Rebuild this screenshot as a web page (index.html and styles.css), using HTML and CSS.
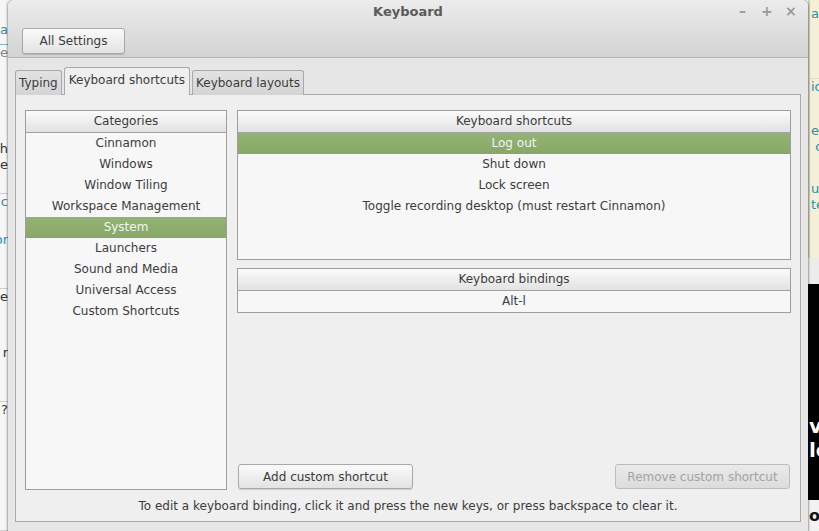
FILE: index.html
```html
<!DOCTYPE html>
<html>
<head>
<meta charset="utf-8">
<title>Keyboard</title>
<link rel="stylesheet" href="styles.css">
</head>
<body>
<div class="screen">
  <div class="bg-left">
    <div class="frag h22"></div>
    <div class="frag h16 teal"><span>la</span></div>
    <div class="frag h6 line-teal"></div>
    <div class="frag h16 gray"><span>e</span></div>
    <div class="frag h80"></div>
    <div class="frag h16"><span>Wh</span></div>
    <div class="frag h16"><span>e</span></div>
    <div class="frag h20 line-gray"></div>
    <div class="frag h16 teal"><span>c</span></div>
    <div class="frag h22"></div>
    <div class="frag h16 teal"><span>or</span></div>
    <div class="frag h40 line-gray"></div>
    <div class="frag h16"><span>ue</span></div>
    <div class="frag h40"></div>
    <div class="frag h16"><span>r</span></div>
    <div class="frag h40 line-gray"></div>
    <div class="frag h16"><span>?</span></div>
    <div class="frag fill line-gray"></div>
  </div>

  <div class="window">
    <div class="header">
      <div class="titlebar">
        <span></span>
        <span class="title">Keyboard</span>
        <div class="wm">
          <span class="wm-btn">&#8211;</span>
          <span class="wm-btn">+</span>
          <span class="wm-btn">&#215;</span>
        </div>
      </div>
      <div class="toolbar">
        <button class="btn settings">All Settings</button>
      </div>
    </div>

    <div class="content">
      <div class="tabs">
        <div class="tab">Typing</div>
        <div class="tab active">Keyboard shortcuts</div>
        <div class="tab">Keyboard layouts</div>
      </div>
      <div class="page">
        <div class="columns">
          <div class="tree categories">
            <div class="tree-head">Categories</div>
            <div class="row">Cinnamon</div>
            <div class="row">Windows</div>
            <div class="row">Window Tiling</div>
            <div class="row">Workspace Management</div>
            <div class="row selected">System</div>
            <div class="row">Launchers</div>
            <div class="row">Sound and Media</div>
            <div class="row">Universal Access</div>
            <div class="row">Custom Shortcuts</div>
          </div>
          <div class="right">
            <div class="tree shortcuts">
              <div class="tree-head">Keyboard shortcuts</div>
              <div class="row selected">Log out</div>
              <div class="row">Shut down</div>
              <div class="row">Lock screen</div>
              <div class="row">Toggle recording desktop (must restart Cinnamon)</div>
            </div>
            <div class="tree bindings">
              <div class="tree-head">Keyboard bindings</div>
              <div class="row">Alt-l</div>
            </div>
            <div class="spacer"></div>
            <div class="actions">
              <button class="btn action">Add custom shortcut</button>
              <button class="btn action disabled">Remove custom shortcut</button>
            </div>
          </div>
        </div>
        <div class="hint">To edit a keyboard binding, click it and press the new keys, or press backspace to clear it.</div>
      </div>
    </div>
  </div>

  <div class="bg-right">
    <div class="beige">
      <div class="rf h6"></div>
      <div class="rf h16 teal">a</div>
      <div class="rf h18"></div>
      <div class="rf h38 sep">&nbsp;</div>
      <div class="rf h16 teal">ion</div>
      <div class="rf h28"></div>
      <div class="rf h16 teal">es</div>
      <div class="rf h16 teal">&nbsp;o</div>
      <div class="rf h26"></div>
      <div class="rf h16 teal">un</div>
      <div class="rf h16 teal">te</div>
    </div>
    <div class="lightgray"></div>
    <div class="black">
      <div class="rf h130"></div>
      <div class="rf big">v</div>
      <div class="rf big">lo</div>
    </div>
    <div class="white">
      <div class="rf big dark">ow</div>
    </div>
  </div>
</div>
</body>
</html>
```

FILE: styles.css
```css
html, body {
  margin: 0;
  padding: 0;
}

body {
  width: 819px;
  height: 531px;
  overflow: hidden;
  font-family: "DejaVu Sans", "Liberation Sans", sans-serif;
  font-size: 12px;
  color: #3c3c3c;
  background: #ffffff;
}

.screen {
  display: flex;
  height: 531px;
}

/* ---------- background fragments ---------- */
.bg-left {
  width: 8px;
  flex: none;
  background: #f6f6f6;
  overflow: hidden;
  display: flex;
  flex-direction: column;
  font-size: 13px;
  color: #333;
}

.frag {
  display: flex;
  justify-content: flex-end;
  white-space: nowrap;
  line-height: 16px;
  flex: none;
}

.frag span {
  flex: none;
}

.frag.teal { color: #2e8ea3; }
.frag.gray { color: #888; }
.frag.fill { flex: 1; }
.line-teal { border-bottom: 1px solid #7bb6c4; }
.line-gray { border-bottom: 1px solid #cfcfcf; }

.h6 { height: 6px; }
.h16 { height: 16px; }
.h18 { height: 18px; }
.h20 { height: 20px; }
.h22 { height: 22px; }
.h26 { height: 26px; }
.h28 { height: 28px; }
.h38 { height: 38px; }
.h40 { height: 40px; }
.h80 { height: 80px; }
.h130 { height: 130px; }

.bg-right {
  width: 11px;
  flex: none;
  overflow: hidden;
  display: flex;
  flex-direction: column;
  font-size: 13px;
  white-space: nowrap;
}

.rf {
  line-height: 16px;
  padding-left: 1px;
  flex: none;
}

.rf.teal { color: #2e8ea3; }

.beige {
  height: 258px;
  background: #f4efd9;
  border-left: 2px solid #d7d2bd;
}

.sep {
  border-bottom: 1px solid #e2dcc4;
}

.lightgray {
  height: 26px;
  background: #ececec;
}

.black {
  height: 216px;
  background: #000;
  color: #fff;
}

.rf.big {
  font-weight: bold;
  font-size: 20px;
  line-height: 24px;
}

.white {
  flex: 1;
  background: #f2f2f2;
  display: flex;
  align-items: center;
}

.rf.dark {
  color: #111;
  font-size: 16px;
}

/* ---------- window ---------- */
.window {
  width: 800px;
  flex: none;
  display: flex;
  flex-direction: column;
  background: #e6e6e6;
  border-radius: 6px 6px 0 0;
  box-shadow: 0 0 2px 1px rgba(0, 0, 0, 0.35);
  position: relative;
  z-index: 1;
}

.header {
  height: 57px;
  border-bottom: 1px solid #b5b5b5;
  background: linear-gradient(#ececec, #d3d3d3);
  border-radius: 6px 6px 0 0;
  display: flex;
  flex-direction: column;
}

.titlebar {
  height: 22px;
  display: grid;
  grid-template-columns: 1fr auto 1fr;
  align-items: center;
}

.title {
  font-weight: bold;
  font-size: 13px;
  color: #5a5a5a;
}

.wm {
  display: flex;
  justify-content: flex-end;
  gap: 13px;
  padding-right: 12px;
  color: #9a9a9a;
  font-size: 14px;
  font-weight: bold;
}

.wm-btn {
  width: 11px;
  text-align: center;
}

.toolbar {
  padding: 6px 0 0 14px;
}

.btn {
  font-family: inherit;
  font-size: 12px;
  color: #3c3c3c;
  background: linear-gradient(#fafafa, #e3e3e3);
  border: 1px solid #a9a9a9;
  border-radius: 3px;
  box-shadow: 0 1px 1px rgba(0, 0, 0, 0.15);
  padding: 0;
  margin: 0;
}

.btn.settings {
  width: 103px;
  height: 26px;
}

.content {
  flex: 1;
  display: flex;
  flex-direction: column;
  padding: 10px 7px 9px;
}

/* ---------- tabs ---------- */
.tabs {
  display: flex;
  align-items: flex-end;
  gap: 2px;
  height: 27px;
  margin-bottom: -1px;
  position: relative;
  z-index: 1;
}

.tab {
  height: 24px;
  line-height: 24px;
  padding: 0 3px;
  border: 1px solid #a9a9a9;
  border-bottom: none;
  border-radius: 3px 3px 0 0;
  background: linear-gradient(#e2e2e2, #d4d4d4);
  color: #3c3c3c;
}

.tab.active {
  height: 27px;
  line-height: 24px;
  padding: 0 4px;
  background: #efefef;
}

.page {
  flex: 1;
  display: flex;
  flex-direction: column;
  background: #efefef;
  border: 1px solid #a9a9a9;
  padding: 15px 9px 7px;
}

.columns {
  flex: 1;
  display: flex;
  gap: 10px;
}

/* ---------- trees ---------- */
.tree {
  border: 1px solid #9e9e9e;
  background: #f7f7f7;
  display: flex;
  flex-direction: column;
}

.tree-head {
  height: 21px;
  line-height: 21px;
  text-align: center;
  border-bottom: 1px solid #a2a2a2;
  background: linear-gradient(#fbfbfb, #e2e2e2);
  color: #3c3c3c;
}

.row {
  height: 21px;
  line-height: 21px;
  text-align: center;
  white-space: nowrap;
}

.row.selected {
  background: linear-gradient(#93b374, #86a866);
  color: #f4f4f4;
}

.categories {
  width: 200px;
}

.right {
  flex: 1;
  display: flex;
  flex-direction: column;
}

.shortcuts {
  height: 148px;
}

.bindings {
  margin-top: 8px;
}

.spacer {
  flex: 1;
}

.actions {
  display: flex;
  justify-content: space-between;
  padding: 0 1px 1px;
}

.btn.action {
  width: 175px;
  height: 25px;
}

.btn.disabled {
  color: #a3a3a3;
  background: linear-gradient(#eaeaea, #dcdcdc);
  border-color: #bdbdbd;
  box-shadow: none;
}

.hint {
  margin-top: 8px;
  height: 16px;
  line-height: 16px;
  text-align: center;
}
```
